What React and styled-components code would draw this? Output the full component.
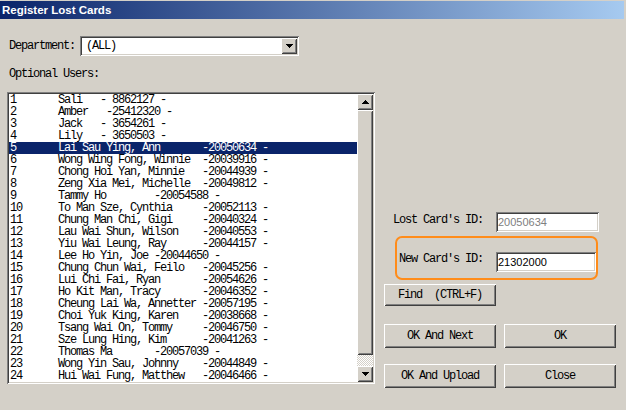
import React from 'react';
import styled, { createGlobalStyle } from 'styled-components';

const GlobalStyle = createGlobalStyle`
    html, body {
        margin: 0;
        padding: 0;
        background: #d4d0c8;
        overflow: hidden;
    }
`;

const MONO = `'Liberation Mono', 'DejaVu Sans Mono', monospace`;

const sunken = `
    box-shadow: inset 1px 1px #808080, inset -1px -1px #ffffff,
        inset 2px 2px #404040, inset -2px -2px #d4d0c8;
`;

const raised = `
    box-shadow: inset 1px 1px #ffffff, inset -1px -1px #404040,
        inset 2px 2px #d4d0c8, inset -2px -2px #808080;
`;

const Dialog = styled.div`
    width: 626px;
    height: 410px;
    padding-top: 1px;
    box-sizing: border-box;
    background: #d4d0c8;
    font-family: ${MONO};
    font-size: 12px;
    letter-spacing: -1.2px;
    color: #000;
`;

const TitleBar = styled.div`
    width: 624px;
    height: 18px;
    padding-left: 2px;
    box-sizing: border-box;
    background: linear-gradient(to right, #0a246a, #a6caf0);
    color: #fff;
    font-family: 'Liberation Sans', Arial, sans-serif;
    font-weight: bold;
    font-size: 11.5px;
    letter-spacing: 0;
    line-height: 18px;
`;

const Content = styled.div`
    padding-left: 7px;
`;

const DeptRow = styled.div`
    display: flex;
    align-items: center;
    margin-top: 17px;
    padding-left: 2px;
`;

const Label = styled.div`
    width: ${p => p.$width || 'auto'};
    line-height: 12px;
    margin-top: ${p => p.$top || '0px'};
    white-space: pre;
    flex-shrink: 0;
`;

const SectionLabel = styled(Label)`
    margin: 12px 0 12px 2px;
`;

const Combo = styled.div`
    width: 219px;
    height: 20px;
    padding: 2px;
    box-sizing: border-box;
    display: flex;
    align-items: center;
    background: #fff;
    ${sunken}
`;

const ComboText = styled.div`
    flex: 1;
    padding-left: 4px;
    line-height: 12px;
`;

const ArrowButton = styled.div`
    width: 16px;
    height: 16px;
    flex-shrink: 0;
    display: flex;
    align-items: center;
    justify-content: center;
    background: #d4d0c8;
    ${raised}
`;

const Main = styled.div`
    display: flex;
    align-items: flex-start;
`;

const ListBox = styled.div`
    width: 368px;
    height: 292px;
    padding: 2px;
    box-sizing: border-box;
    display: flex;
    background: #fff;
    ${sunken}
`;

const Rows = styled.div`
    flex: 1;
`;

const Row = styled.div`
    display: flex;
    height: 12px;
    line-height: 12px;
    padding-left: 1px;
    white-space: pre;
    background: ${p => (p.$selected ? '#0a246a' : 'transparent')};
    color: ${p => (p.$selected ? '#fff' : '#000')};
`;

const RowNum = styled.span`
    width: 48px;
    flex-shrink: 0;
`;

const ScrollBar = styled.div`
    width: 16px;
    display: flex;
    flex-direction: column;
`;

const Thumb = styled.div`
    height: 245px;
    background: #d4d0c8;
    ${raised}
`;

const Track = styled.div`
    flex: 1;
    background: repeating-conic-gradient(#ffffff 0 25%, #d4d0c8 0 50%) 0 0 / 2px 2px;
`;

const Panel = styled.div`
    margin-left: 9px;
    padding-top: 120px;
    display: flex;
    flex-direction: column;
    align-items: flex-start;
`;

const FieldRow = styled.div`
    display: flex;
    align-items: flex-start;
    padding-left: 9px;
`;

const HighlightBox = styled.div`
    margin: 4px 0 0 11px;
    width: 203px;
    height: 44px;
    padding: 14px 0 0 2px;
    box-sizing: border-box;
    border: 2px solid #ff8c1a;
    border-radius: 7px;
    display: flex;
    align-items: flex-start;
`;

const TextBox = styled.div`
    width: ${p => p.$width};
    height: 20px;
    padding: 2px 2px;
    box-sizing: border-box;
    background: #fff;
    color: ${p => p.$color || '#000'};
    font-family: 'Liberation Sans', Arial, sans-serif;
    font-size: 11px;
    letter-spacing: 0;
    line-height: 16px;
    ${sunken}
`;

const Button = styled.div`
    width: 112px;
    height: ${p => p.$height || '24px'};
    display: flex;
    align-items: center;
    justify-content: center;
    background: #d4d0c8;
    white-space: pre;
    line-height: 12px;
    ${raised}
`;

const FindButton = styled(Button)`
    margin-top: 4px;
`;

const ButtonGrid = styled.div`
    margin-top: 18px;
    display: grid;
    grid-template-columns: 112px 112px;
    column-gap: 8px;
    row-gap: 16px;
`;

const DownArrow = () => (
    <svg width="7" height="4" viewBox="0 0 7 4">
        <path d="M0 0h7v1H0zM1 1h5v1H1zM2 2h3v1H2zM3 3h1v1H3z" fill="#000" />
    </svg>
);

const UpArrow = () => (
    <svg width="7" height="4" viewBox="0 0 7 4">
        <path d="M3 0h1v1H3zM2 1h3v1H2zM1 2h5v1H1zM0 3h7v1H0z" fill="#000" />
    </svg>
);

// [name, pad width, id part]
const users = [
    ['Sali', 7, ' 8862127'],
    ['Amber', 8, '25412320'],
    ['Jack', 7, ' 3654261'],
    ['Lily', 7, ' 3650503'],
    ['Lai Sau Ying, Ann', 24, '20050634'],
    ['Wong Wing Fong, Winnie', 24, '20039916'],
    ['Chong Hoi Yan, Minnie', 24, '20044939'],
    ['Zeng Xia Mei, Michelle', 24, '20049812'],
    ['Tammy Ho', 16, '20054588'],
    ['To Man Sze, Cynthia', 24, '20052113'],
    ['Chung Man Chi, Gigi', 24, '20040324'],
    ['Lau Wai Shun, Wilson', 24, '20040553'],
    ['Yiu Wai Leung, Ray', 24, '20044157'],
    ['Lee Ho Yin, Joe', 16, '20044650'],
    ['Chung Chun Wai, Feilo', 24, '20045256'],
    ['Lui Chi Fai, Ryan', 24, '20054626'],
    ['Ho Kit Man, Tracy', 24, '20046352'],
    ['Cheung Lai Wa, Annetter', 24, '20057195'],
    ['Choi Yuk King, Karen', 24, '20038668'],
    ['Tsang Wai On, Tommy', 24, '20046750'],
    ['Sze Lung Hing, Kim', 24, '20041263'],
    ['Thomas Ma', 16, '20057039'],
    ['Wong Yin Sau, Johnny', 24, '20044849'],
    ['Hui Wai Fung, Matthew', 24, '20046466'],
];

const App = () => (
    <>
        <GlobalStyle />
        <Dialog>
            <TitleBar>Register Lost Cards</TitleBar>
            <Content>
                <DeptRow>
                    <Label $width="71px">Department:</Label>
                    <Combo>
                        <ComboText>(ALL)</ComboText>
                        <ArrowButton>
                            <DownArrow />
                        </ArrowButton>
                    </Combo>
                </DeptRow>
                <SectionLabel>Optional Users:</SectionLabel>
                <Main>
                    <ListBox>
                        <Rows>
                            {users.map(([name, pad, id], i) => (
                                <Row key={i} $selected={i === 4}>
                                    <RowNum>{i + 1}</RowNum>
                                    <span>{`${name.padEnd(pad)}-${id} -`}</span>
                                </Row>
                            ))}
                        </Rows>
                        <ScrollBar>
                            <ArrowButton>
                                <UpArrow />
                            </ArrowButton>
                            <Thumb />
                            <Track />
                            <ArrowButton>
                                <DownArrow />
                            </ArrowButton>
                        </ScrollBar>
                    </ListBox>
                    <Panel>
                        <FieldRow>
                            <Label $width="103px" $top="2px">Lost Card's ID:</Label>
                            <TextBox $width="103px" $color="#808080">20050634</TextBox>
                        </FieldRow>
                        <HighlightBox>
                            <Label $width="97px" $top="1px">New Card's ID:</Label>
                            <TextBox $width="101px">21302000</TextBox>
                        </HighlightBox>
                        <FindButton $height="22px">Find  (CTRL+F)</FindButton>
                        <ButtonGrid>
                            <Button>OK And Next</Button>
                            <Button>OK</Button>
                            <Button>OK And Upload</Button>
                            <Button>Close</Button>
                        </ButtonGrid>
                    </Panel>
                </Main>
            </Content>
        </Dialog>
    </>
);

export default App;
